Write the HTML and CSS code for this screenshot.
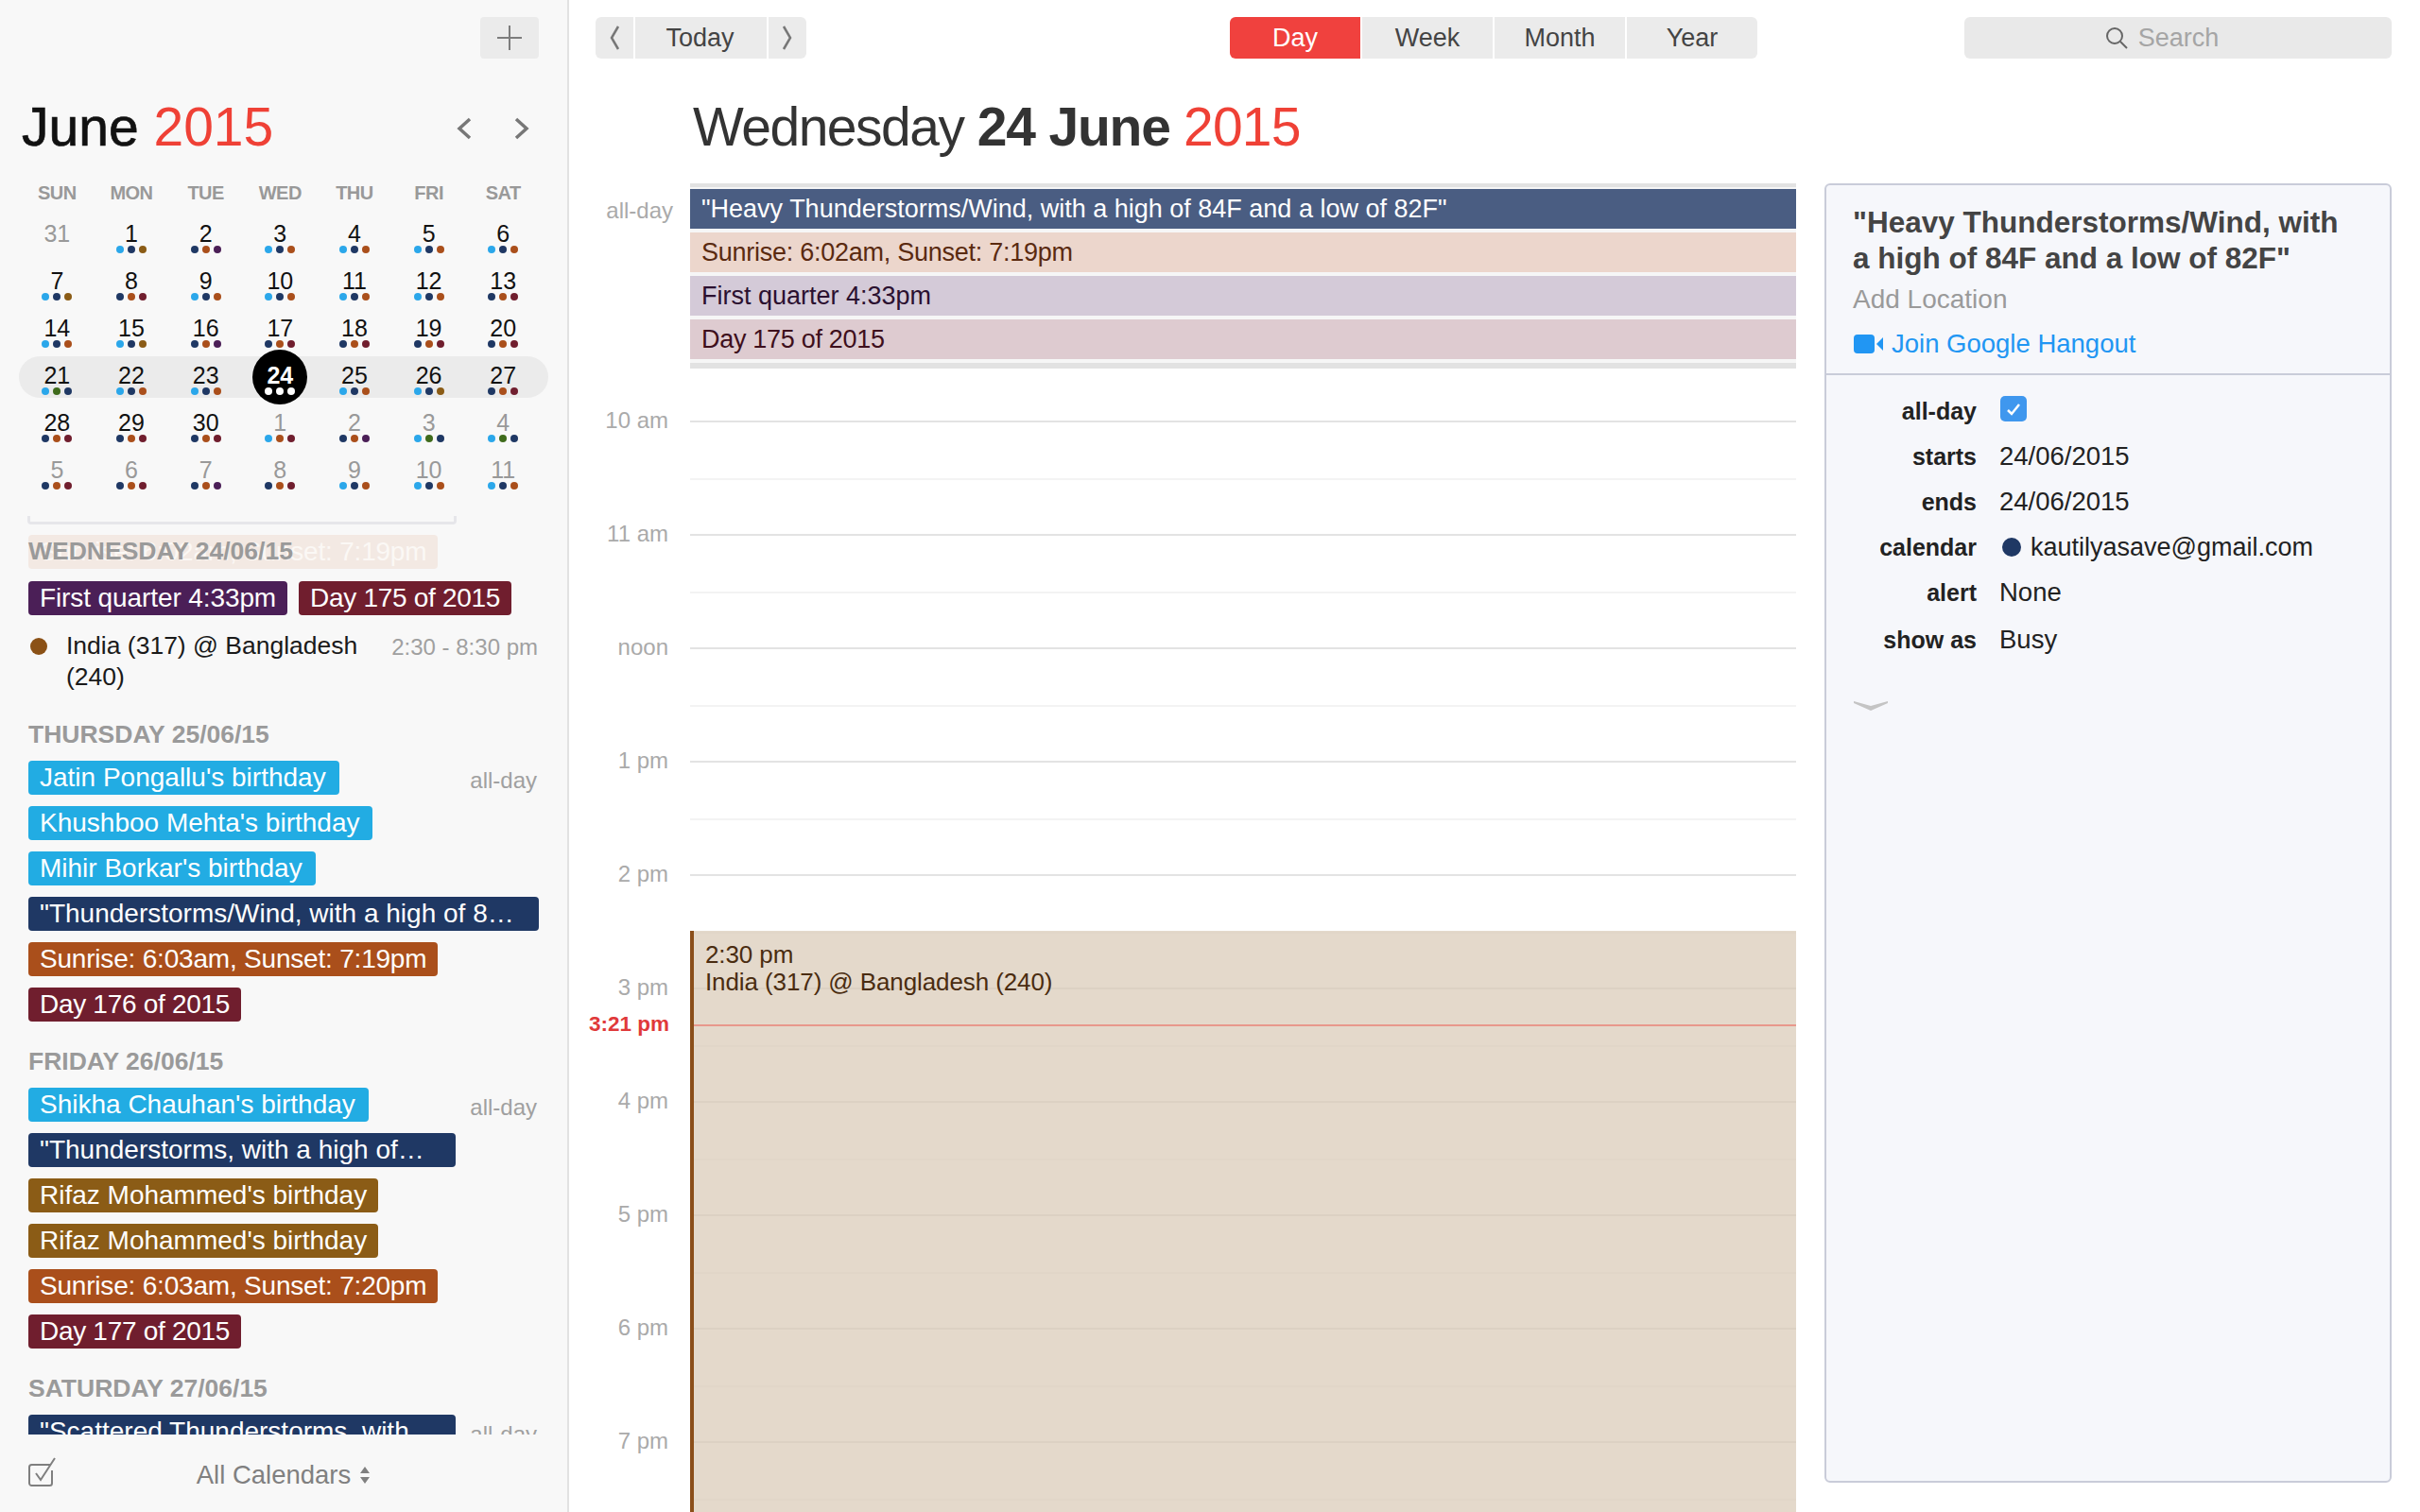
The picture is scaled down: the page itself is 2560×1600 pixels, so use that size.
FILE: index.html
```html
<!DOCTYPE html>
<html lang="en">
<head>
    <meta charset="UTF-8">
    <title>Calendar</title>
    <link rel="stylesheet" href="styles.css">
</head>
<body>
<div class="app">
    <aside class="sidebar">
        <div class="side-top">
            <button class="add-btn"><svg width="28" height="28" viewBox="0 0 28 28"><path d="M14 1v26M1 14h26" stroke="#7d7d7d" stroke-width="2" fill="none"/></svg></button>
        </div>
        <div class="month-head">
            <h1 class="month-title">June <span class="year">2015</span></h1>
            <div class="month-nav">
                <svg width="16" height="24" viewBox="0 0 16 24"><path d="M14 2 3 12l11 10" stroke="#777" stroke-width="3.500" fill="none"/></svg>
                <svg width="16" height="24" viewBox="0 0 16 24"><path d="M2 2l11 10L2 22" stroke="#777" stroke-width="3.500" fill="none"/></svg>
            </div>
        </div>
        <div class="weekdays">
            <span>SUN</span><span>MON</span><span>TUE</span><span>WED</span><span>THU</span><span>FRI</span><span>SAT</span>
        </div>
        <div class="weeks">
            <div class="week">
                <div class="cell other">31<div class="dots"></div></div>
                <div class="cell">1<div class="dots"><i class="c"></i><i class="n"></i><i class="b"></i></div></div>
                <div class="cell">2<div class="dots"><i class="n"></i><i class="o"></i><i class="p"></i></div></div>
                <div class="cell">3<div class="dots"><i class="c"></i><i class="n"></i><i class="o"></i></div></div>
                <div class="cell">4<div class="dots"><i class="c"></i><i class="n"></i><i class="o"></i></div></div>
                <div class="cell">5<div class="dots"><i class="c"></i><i class="n"></i><i class="o"></i></div></div>
                <div class="cell">6<div class="dots"><i class="c"></i><i class="n"></i><i class="o"></i></div></div>
            </div>
            <div class="week">
                <div class="cell">7<div class="dots"><i class="c"></i><i class="n"></i><i class="b"></i></div></div>
                <div class="cell">8<div class="dots"><i class="n"></i><i class="o"></i><i class="m"></i></div></div>
                <div class="cell">9<div class="dots"><i class="c"></i><i class="n"></i><i class="o"></i></div></div>
                <div class="cell">10<div class="dots"><i class="c"></i><i class="n"></i><i class="o"></i></div></div>
                <div class="cell">11<div class="dots"><i class="c"></i><i class="n"></i><i class="o"></i></div></div>
                <div class="cell">12<div class="dots"><i class="c"></i><i class="n"></i><i class="o"></i></div></div>
                <div class="cell">13<div class="dots"><i class="n"></i><i class="o"></i><i class="m"></i></div></div>
            </div>
            <div class="week">
                <div class="cell">14<div class="dots"><i class="c"></i><i class="n"></i><i class="o"></i></div></div>
                <div class="cell">15<div class="dots"><i class="c"></i><i class="n"></i><i class="b"></i></div></div>
                <div class="cell">16<div class="dots"><i class="n"></i><i class="o"></i><i class="p"></i></div></div>
                <div class="cell">17<div class="dots"><i class="n"></i><i class="o"></i><i class="m"></i></div></div>
                <div class="cell">18<div class="dots"><i class="n"></i><i class="o"></i><i class="m"></i></div></div>
                <div class="cell">19<div class="dots"><i class="n"></i><i class="o"></i><i class="m"></i></div></div>
                <div class="cell">20<div class="dots"><i class="n"></i><i class="o"></i><i class="m"></i></div></div>
            </div>
            <div class="week current">
                <div class="cell">21<div class="dots"><i class="c"></i><i class="g"></i><i class="n"></i></div></div>
                <div class="cell">22<div class="dots"><i class="c"></i><i class="n"></i><i class="o"></i></div></div>
                <div class="cell">23<div class="dots"><i class="c"></i><i class="n"></i><i class="o"></i></div></div>
                <div class="cell today">24<div class="dots"><i class="w"></i><i class="w"></i><i class="w"></i></div></div>
                <div class="cell">25<div class="dots"><i class="c"></i><i class="n"></i><i class="o"></i></div></div>
                <div class="cell">26<div class="dots"><i class="c"></i><i class="n"></i><i class="b"></i></div></div>
                <div class="cell">27<div class="dots"><i class="n"></i><i class="o"></i><i class="m"></i></div></div>
            </div>
            <div class="week">
                <div class="cell">28<div class="dots"><i class="n"></i><i class="o"></i><i class="m"></i></div></div>
                <div class="cell">29<div class="dots"><i class="n"></i><i class="o"></i><i class="m"></i></div></div>
                <div class="cell">30<div class="dots"><i class="n"></i><i class="o"></i><i class="m"></i></div></div>
                <div class="cell other">1<div class="dots"><i class="c"></i><i class="o"></i><i class="m"></i></div></div>
                <div class="cell other">2<div class="dots"><i class="n"></i><i class="o"></i><i class="p"></i></div></div>
                <div class="cell other">3<div class="dots"><i class="c"></i><i class="g"></i><i class="n"></i></div></div>
                <div class="cell other">4<div class="dots"><i class="c"></i><i class="g"></i><i class="n"></i></div></div>
            </div>
            <div class="week">
                <div class="cell other">5<div class="dots"><i class="n"></i><i class="o"></i><i class="m"></i></div></div>
                <div class="cell other">6<div class="dots"><i class="n"></i><i class="o"></i><i class="m"></i></div></div>
                <div class="cell other">7<div class="dots"><i class="n"></i><i class="o"></i><i class="p"></i></div></div>
                <div class="cell other">8<div class="dots"><i class="n"></i><i class="o"></i><i class="m"></i></div></div>
                <div class="cell other">9<div class="dots"><i class="c"></i><i class="n"></i><i class="o"></i></div></div>
                <div class="cell other">10<div class="dots"><i class="c"></i><i class="n"></i><i class="o"></i></div></div>
                <div class="cell other">11<div class="dots"><i class="c"></i><i class="n"></i><i class="o"></i></div></div>
            </div>
        </div>
        <div class="bracket"></div>

        <div class="agenda">
            <div class="stuck">
                <div class="pill ghost">Sunrise: 6:02am, Sunset: 7:19pm</div>
                <div class="day-head">WEDNESDAY 24/06/15</div>
            </div>
            <div class="pill-row first">
                <div class="pill purple">First quarter 4:33pm</div>
                <div class="pill maroon">Day 175 of 2015</div>
            </div>
            <div class="agenda-event">
                <span class="event-dot"></span>
                <div class="event-name">India (317) @ Bangladesh (240)</div>
                <div class="event-time">2:30 - 8:30 pm</div>
            </div>

            <div class="day-head spaced">THURSDAY 25/06/15</div>
            <div class="pills">
                <div class="pill-line"><div class="pill sky">Jatin Pongallu's birthday</div><span class="all-day">all-day</span></div>
                <div class="pill sky">Khushboo Mehta's birthday</div>
                <div class="pill sky">Mihir Borkar's birthday</div>
                <div class="pill navy wide">"Thunderstorms/Wind, with a high of 84F and a low of 82F"</div>
                <div class="pill rust">Sunrise: 6:03am, Sunset: 7:19pm</div>
                <div class="pill maroon">Day 176 of 2015</div>
            </div>

            <div class="day-head spaced">FRIDAY 26/06/15</div>
            <div class="pills">
                <div class="pill-line"><div class="pill sky">Shikha Chauhan's birthday</div><span class="all-day">all-day</span></div>
                <div class="pill navy short">"Thunderstorms, with a high of…</div>
                <div class="pill gold">Rifaz Mohammed's birthday</div>
                <div class="pill gold">Rifaz Mohammed's birthday</div>
                <div class="pill rust">Sunrise: 6:03am, Sunset: 7:20pm</div>
                <div class="pill maroon">Day 177 of 2015</div>
            </div>

            <div class="day-head spaced">SATURDAY 27/06/15</div>
            <div class="pills">
                <div class="pill-line"><div class="pill navy short">"Scattered Thunderstorms, with</div><span class="all-day">all-day</span></div>
            </div>
        </div>

        <div class="side-foot">
            <svg class="foot-check" width="30" height="32" viewBox="0 0 30 32"><path d="M22 8.500v-.5H3.500A2.500 2.500 0 0 0 1 10.500v17A2.500 2.500 0 0 0 3.500 30h19a2.500 2.500 0 0 0 2.500-2.500V14" stroke="#7f7f7f" stroke-width="2" fill="none"/><path d="M8 17l5 7L28 1" stroke="#7f7f7f" stroke-width="2" fill="none"/></svg>
            <div class="cal-select">All Calendars <svg width="12" height="20" viewBox="0 0 12 20"><path d="M6 1l5 7H1zM6 19l5-7H1z" fill="#808080"/></svg></div>
        </div>
    </aside>

    <main class="main">
        <div class="toolbar">
            <div class="nav-group">
                <button class="tool-btn arrow"><svg width="14" height="26" viewBox="0 0 14 26"><path d="M11 1 4 13l7 12" stroke="#777" stroke-width="2.500" fill="none"/></svg></button>
                <button class="tool-btn today-btn">Today</button>
                <button class="tool-btn arrow"><svg width="14" height="26" viewBox="0 0 14 26"><path d="M3 1l7 12-7 12" stroke="#777" stroke-width="2.500" fill="none"/></svg></button>
            </div>
            <div class="seg">
                <button class="seg-btn active">Day</button>
                <button class="seg-btn">Week</button>
                <button class="seg-btn">Month</button>
                <button class="seg-btn">Year</button>
            </div>
            <div class="search">
                <svg width="24" height="24" viewBox="0 0 24 24"><circle cx="10" cy="10" r="8" stroke="#666" stroke-width="2" fill="none"/><path d="M16 16l7 7" stroke="#666" stroke-width="2" fill="none"/></svg>
                <span>Search</span>
            </div>
        </div>

        <h1 class="day-title">Wednesday <b>24 June</b> <span class="year">2015</span></h1>

        <div class="content">
            <div class="day-view">
                <div class="allday">
                    <div class="allday-label">all-day</div>
                    <div class="allday-events">
                        <div class="bar bar-navy">"Heavy Thunderstorms/Wind, with a high of 84F and a low of 82F"</div>
                        <div class="bar bar-rust">Sunrise: 6:02am, Sunset: 7:19pm</div>
                        <div class="bar bar-purple">First quarter 4:33pm</div>
                        <div class="bar bar-maroon">Day 175 of 2015</div>
                    </div>
                </div>
                <div class="hours">
                    <div class="hour"><div class="hour-label">10 am</div><div class="slot"></div></div>
                    <div class="hour"><div class="hour-label">11 am</div><div class="slot"></div></div>
                    <div class="hour"><div class="hour-label">noon</div><div class="slot"></div></div>
                    <div class="hour"><div class="hour-label">1 pm</div><div class="slot"></div></div>
                    <div class="hour"><div class="hour-label">2 pm</div><div class="slot"></div></div>
                    <div class="hour"><div class="hour-label">3 pm</div><div class="slot"></div></div>
                    <div class="hour"><div class="hour-label">4 pm</div><div class="slot"></div></div>
                    <div class="hour"><div class="hour-label">5 pm</div><div class="slot"></div></div>
                    <div class="hour"><div class="hour-label">6 pm</div><div class="slot"></div></div>
                    <div class="hour"><div class="hour-label">7 pm</div><div class="slot"></div></div>
                    <div class="timed-event">
                        <div>2:30 pm</div>
                        <div>India (317) @ Bangladesh (240)</div>
                    </div>
                    <div class="now-label">3:21 pm</div>
                    <div class="now-line"></div>
                </div>
            </div>

            <section class="details">
                <div class="details-head">
                    <h2 class="details-title">"Heavy Thunderstorms/Wind, with<br>a high of 84F and a low of 82F"</h2>
                    <div class="add-location">Add Location</div>
                    <div class="hangout">
                        <svg width="33" height="20" viewBox="0 0 33 20"><rect x="1" y="0" width="22" height="20" rx="4" fill="#2196f3"/><path d="M32 3v14l-7-7z" fill="#2196f3"/></svg>
                        <span>Join Google Hangout</span>
                    </div>
                </div>
                <div class="details-body">
                    <div class="field"><span class="field-name">all-day</span><span class="checkbox"><svg width="16" height="14" viewBox="0 0 16 14"><path d="M2 8l4 4 8-10" stroke="#fff" stroke-width="2.500" fill="none"/></svg></span></div>
                    <div class="field"><span class="field-name">starts</span><span>24/06/2015</span></div>
                    <div class="field"><span class="field-name">ends</span><span>24/06/2015</span></div>
                    <div class="field"><span class="field-name">calendar</span><span class="cal-value"><i class="cal-dot"></i>kautilyasave@gmail.com</span></div>
                    <div class="field"><span class="field-name">alert</span><span>None</span></div>
                    <div class="field last"><span class="field-name">show as</span><span>Busy</span></div>
                    <svg class="more" width="38" height="14" viewBox="0 0 38 14"><path d="M1 2 19 7 37 2 37 4 19 12 1 4z" fill="#c4c4c4"/></svg>
                </div>
            </section>
        </div>
    </main>
</div>
</body>
</html>
```

FILE: styles.css
```css
* {
    box-sizing: border-box;
}
html, body {
    margin: 0;
    height: 1600px;
    overflow: hidden;
}
body {
    font-family: "Liberation Sans", Arial, sans-serif;
    color: #1a1a1a;
    background: #fff;
}
h1, h2 {
    margin: 0;
    font-weight: normal;
}
button {
    font: inherit;
    border: none;
    padding: 0;
}
.app {
    display: flex;
    height: 1600px;
}
.year {
    color: #ef4136;
    -webkit-text-stroke: 0;
}

/* sidebar */
.sidebar {
    width: 602px;
    flex: none;
    height: 1600px;
    display: flex;
    flex-direction: column;
    background: #f8f8f8;
    border-right: 2px solid #e2e2e2;
}
.side-top {
    display: flex;
    justify-content: flex-end;
    padding: 18px 30px 0 0;
}
.add-btn {
    width: 62px;
    height: 44px;
    background: #ebebeb;
    border-radius: 4px;
    display: flex;
    align-items: center;
    justify-content: center;
}
.month-head {
    display: flex;
    justify-content: space-between;
    align-items: center;
    margin-top: 39px;
    padding: 0 40px 0 23px;
}
.month-title {
    font-size: 57px;
    line-height: 66px;
    color: #111;
    -webkit-text-stroke: 0.7px #111;
}
.month-nav {
    display: flex;
    gap: 45px;
    margin-top: 4px;
}
.weekdays {
    display: grid;
    grid-template-columns: repeat(7, 78.67px);
    padding-left: 21px;
    margin-top: 25px;
    margin-bottom: 6px;
    font-size: 20px;
    line-height: 24px;
    font-weight: bold;
    letter-spacing: -0.5px;
    color: #999;
    text-align: center;
}
.week {
    display: grid;
    grid-template-columns: repeat(7, 78.67px);
    padding-left: 21px;
    height: 50px;
    position: relative;
}
.week.current::before {
    content: "";
    position: absolute;
    left: 20px;
    width: 560px;
    top: 5px;
    height: 44px;
    border-radius: 22px;
    background: #ebebeb;
}
.cell {
    position: relative;
    padding-top: 11px;
    font-size: 25px;
    line-height: 28px;
    text-align: center;
    color: #111;
}
.cell.other {
    color: #999;
}
.cell.today {
    z-index: 1;
    color: #fff;
    font-weight: bold;
}
.cell.today::before {
    content: "";
    position: absolute;
    left: 10px;
    top: -2px;
    width: 58px;
    height: 58px;
    border-radius: 50%;
    background: #000;
    z-index: -1;
}
.dots {
    display: flex;
    justify-content: center;
    gap: 4px;
    height: 8px;
    margin-top: -1px;
}
.dots i {
    width: 8px;
    height: 8px;
    border-radius: 50%;
}
.c { background: #2ba7ea; }
.n { background: #1f3864; }
.b { background: #8b5c16; }
.o { background: #aa4f1b; }
.p { background: #4b1f57; }
.m { background: #701e2e; }
.g { background: #3f6b1c; }
.w { background: #fff; }
.bracket {
    width: 454px;
    height: 9px;
    margin: 24px 0 0 29px;
    border: 3px solid #e6e6ea;
    border-top: none;
    border-radius: 0 0 4px 4px;
    flex: none;
}

/* agenda list */
.agenda {
    flex: 1;
    min-height: 0;
    overflow: hidden;
    padding: 11px 30px 0;
}
.stuck {
    display: grid;
}
.stuck > * {
    grid-area: 1 / 1;
}
.day-head {
    font-size: 26.500px;
    line-height: 34px;
    font-weight: bold;
    color: #9a9a9a;
}
.day-head.spaced {
    margin-top: 25px;
    margin-bottom: 11px;
}
.pill {
    height: 36px;
    line-height: 35px;
    padding: 0 12px;
    font-size: 28px;
    color: #fff;
    border-radius: 4px;
    width: fit-content;
    white-space: nowrap;
    overflow: hidden;
    text-overflow: ellipsis;
    flex: none;
}
.ghost {
    background: #f3e9e3;
    color: #fbf8f5;
    letter-spacing: -0.2px;
}
.purple { background: #4b1f57; letter-spacing: -0.1px; }
.maroon { background: #701e2e; letter-spacing: -0.3px; }
.sky { background: #22ace3; padding-right: 14px; }
.navy { background: #1f3864; }
.rust { background: #aa4f1b; letter-spacing: -0.2px; }
.gold { background: #8b5c16; }
.pill.wide { width: 540px; }
.pill.short { width: 452px; }
.pill-row {
    display: flex;
    gap: 12px;
}
.pill-row.first {
    margin-top: 13px;
}
.pills {
    display: flex;
    flex-direction: column;
    gap: 12px;
}
.pill-line {
    display: flex;
    justify-content: space-between;
    height: 36px;
}
.all-day {
    font-size: 24px;
    line-height: 42px;
    height: 36px;
    color: #a0a0a0;
    padding-right: 2px;
}
.agenda-event {
    display: grid;
    grid-template-columns: 40px 1fr auto;
    margin-top: 16px;
    padding-bottom: 2px;
    font-size: 26.500px;
    line-height: 33px;
}
.event-dot {
    width: 18px;
    height: 18px;
    border-radius: 50%;
    background: #8b5116;
    margin: 8px 0 0 2px;
}
.event-name {
    width: 330px;
}
.event-time {
    font-size: 24px;
    line-height: 36px;
    color: #a0a0a0;
    padding-right: 1px;
}
.side-foot {
    height: 82px;
    flex: none;
    display: grid;
    grid-template-columns: 1fr auto 1fr;
    align-items: center;
    padding: 0 30px 0 30px;
}
.foot-check {
    margin-top: -2px;
}
.cal-select {
    display: flex;
    align-items: center;
    gap: 9px;
    font-size: 27.500px;
    color: #808080;
    padding-top: 4px;
}

/* main */
.main {
    flex: 1;
    min-width: 0;
    height: 1600px;
    overflow: hidden;
    display: flex;
    flex-direction: column;
}
.toolbar {
    display: flex;
    padding: 18px 30px 0 28px;
    font-size: 27px;
    color: #444;
}
.nav-group {
    display: flex;
    gap: 2px;
}
.tool-btn {
    height: 44px;
    background: #ebebeb;
    color: #444;
    display: flex;
    align-items: center;
    justify-content: center;
}
.tool-btn.arrow {
    width: 40px;
}
.tool-btn.arrow:first-child {
    border-radius: 6px 0 0 6px;
}
.tool-btn.arrow:last-child {
    border-radius: 0 6px 6px 0;
}
.today-btn {
    width: 139px;
    padding-right: 2px;
}
.seg {
    display: flex;
    gap: 2px;
    margin-left: 448px;
}
.seg-btn {
    width: 138px;
    height: 44px;
    background: #ebebeb;
    color: #444;
}
.seg-btn:first-child {
    border-radius: 6px 0 0 6px;
}
.seg-btn:last-child {
    border-radius: 0 6px 6px 0;
}
.seg-btn.active {
    background: #f0413e;
    color: #fff;
}
.search {
    width: 452px;
    height: 44px;
    margin-left: auto;
    padding-right: 34px;
    background: #e9e9e9;
    border-radius: 6px;
    display: flex;
    align-items: center;
    justify-content: center;
    gap: 11px;
    color: #a5a5a5;
}
.day-title {
    font-size: 57px;
    line-height: 66px;
    letter-spacing: -1.500px;
    margin-top: 39px;
    padding-left: 131px;
    color: #333;
}
.day-title b {
    letter-spacing: -1.200px;
}
.day-title .year {
    letter-spacing: -0.800px;
}
.content {
    flex: 1;
    min-height: 0;
    display: grid;
    grid-template-columns: 1298px 600px;
    column-gap: 30px;
    margin-top: 27px;
}
.day-view {
    min-width: 0;
}
.allday {
    display: grid;
    grid-template-columns: 128px 1fr;
}
.allday-label {
    font-size: 24px;
    line-height: 30px;
    padding: 14px 18px 0 0;
    text-align: right;
    color: #aaa;
}
.allday-events {
    display: flex;
    flex-direction: column;
    gap: 4px;
    height: 196px;
    padding-top: 2px;
    background: #f6f6f6;
    border-top: 4px solid #e2e2e2;
    border-bottom: 6px solid #e2e2e2;
}
.bar {
    height: 42px;
    line-height: 42px;
    padding-left: 12px;
    font-size: 27px;
}
.bar-navy { background: #4a5d82; color: #fff; }
.bar-rust { background: #ecd6cc; color: #5a2a10; letter-spacing: -0.26px; }
.bar-purple { background: #d4cad8; color: #2b1030; }
.bar-maroon { background: #decbd0; color: #3e0f1c; letter-spacing: -0.3px; }

.hours {
    position: relative;
    margin-top: 55px;
}
.hour {
    display: grid;
    grid-template-columns: 128px 1fr;
    height: 120px;
}
.hour-label {
    height: 0;
    line-height: 0;
    padding-right: 23px;
    text-align: right;
    font-size: 24px;
    color: #aaa;
}
.slot {
    border-top: 2px solid #e3e3e3;
}
.slot::after {
    content: "";
    display: block;
    height: 59px;
    border-bottom: 2px solid #f3f3f3;
}
.timed-event {
    position: absolute;
    left: 128px;
    right: 0;
    top: 540px;
    height: 700px;
    padding: 11px 0 0 12px;
    background: rgba(216, 201, 181, 0.7);
    border-left: 4px solid #8b4f1a;
    font-size: 26px;
    line-height: 29px;
    letter-spacing: -0.1px;
    color: #4a2c10;
}
.now-label {
    position: absolute;
    right: 1192px;
    top: 624px;
    font-size: 22.500px;
    line-height: 30px;
    font-weight: bold;
    color: #e0393a;
}
.now-line {
    position: absolute;
    left: 132px;
    right: 0;
    top: 639px;
    height: 2px;
    background: #e8988c;
}

/* details panel */
.details {
    height: 1375px;
    background: #f6f7fb;
    border: 2px solid #c9ccd9;
    border-radius: 6px;
}
.details-head {
    padding: 20px 20px 14px 28px;
    border-bottom: 2px solid #c9ccd9;
}
.details-title {
    font-size: 31.500px;
    line-height: 38px;
    font-weight: bold;
    color: #444;
}
.add-location {
    margin-top: 8px;
    font-size: 28px;
    line-height: 34px;
    color: #9a9a9a;
}
.hangout {
    display: flex;
    align-items: center;
    gap: 8px;
    margin-top: 13px;
    font-size: 27.500px;
    line-height: 34px;
    color: #2196f3;
}
.details-body {
    padding-top: 14px;
}
.field {
    display: grid;
    grid-template-columns: 159px 1fr;
    column-gap: 24px;
    height: 48px;
    line-height: 48px;
    font-size: 27.500px;
    color: #222;
}
.field.last {
    margin-top: 2px;
}
.field-name {
    font-size: 25px;
    font-weight: bold;
    text-align: right;
}
.checkbox {
    width: 28px;
    height: 27px;
    margin: 8px 0 0 1px;
    background: #3f97ee;
    border-radius: 5px;
    display: flex;
    align-items: center;
    justify-content: center;
}
.cal-value {
    display: flex;
    align-items: center;
    gap: 10px;
    font-size: 27px;
}
.cal-dot {
    width: 20px;
    height: 20px;
    border-radius: 50%;
    margin-left: 3px;
    background: #1f3864;
}
.more {
    display: block;
    margin: 39px 0 0 28px;
}
```
